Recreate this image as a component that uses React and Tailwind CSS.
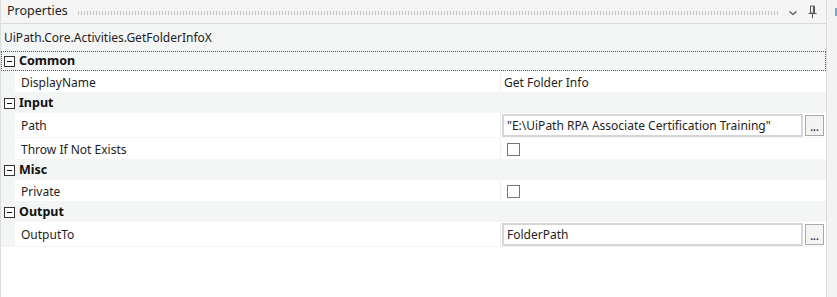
import React from 'react';

const font = { fontFamily: '"Noto Sans", "Open Sans", sans-serif' };

function Minus() {
  return (
    <svg width="11" height="11" viewBox="0 0 11 11" className="shrink-0">
      <rect x="0.5" y="0.5" width="10" height="10" fill="#fff" stroke="#333" />
      <line x1="3" y1="5.5" x2="8" y2="5.5" stroke="#111" />
    </svg>
  );
}

function Category({ name, focused }) {
  return (
    <div
      className={`flex h-[20px] items-center gap-[4px] pl-[2px] ${
        focused ? 'border border-dotted border-[#555]' : 'border border-transparent'
      }`}
    >
      <Minus />
      <span className="pt-[1px] text-[12.5px] font-bold text-[#111]">{name}</span>
    </div>
  );
}

function Row({ label, tall, children }) {
  return (
    <div className="flex pl-[14px]">
      <div className={`flex w-full bg-white ${tall ? 'h-[24px]' : 'h-[21px]'} mb-px`}>
        <div className="flex w-[486px] items-center border-r border-[#eef0f0] pl-[6px] pt-[2px] text-[12px] text-[#1e1e1e]">
          {label}
        </div>
        <div className="flex flex-1 items-center">{children}</div>
      </div>
    </div>
  );
}

function TextValue({ value }) {
  return (
    <div className="flex h-full flex-1 items-center gap-[2px] pl-[1px] pr-[2px]">
      <div className="flex h-[23px] flex-1 items-center border-2 border-[#d6d6d6] bg-white pl-[3px] pt-[1px] text-[12px] text-[#1e1e1e]">
        {value}
      </div>
      <div className="flex h-[21px] w-[19px] items-end justify-center border border-[#a9a9a9] bg-[#f4f4f4] pb-[3px] text-[10px] leading-none font-bold text-[#333]">
        ...
      </div>
    </div>
  );
}

function Check() {
  return <div className="ml-[6px] mt-[1px] h-[13px] w-[13px] border border-[#777] bg-white" />;
}

export default function App() {
  return (
    <div className="flex h-[297px] w-[837px] bg-[#f3f3f3]" style={font}>
      <div className="flex w-[827px] flex-col border-l border-r border-[#dcdcdc] bg-[#f4f5f5]">
        <div className="flex h-[24px] items-center border-b border-[#d9d9d9] bg-[#f5f5f5]">
          <span className="pl-[6px] text-[12.5px] text-[#1e1e1e]">Properties</span>
          <div className="ml-[9px] mr-[9px] mt-[2px] h-[4px] flex-1 bg-[radial-gradient(circle,#c4c4c4_0.7px,transparent_0.9px)] bg-[length:3px_2px]" />
          <svg width="10" height="8" viewBox="0 0 10 8" className="mt-[2px]">
            <path d="M1.5 2.5 L5 5.5 L8.5 2.5" fill="none" stroke="#555" strokeWidth="1.3" />
          </svg>
          <svg width="9" height="14" viewBox="0 0 9 14" className="ml-[10px] mr-[9px]">
            <path d="M2.5 1 H6.5 V8 H2.5 Z" fill="none" stroke="#555" />
            <path d="M0.5 8.5 H8.5" stroke="#555" />
            <path d="M4.5 9 V13" stroke="#555" />
            <path d="M5.5 1.5 V7.5" stroke="#555" />
          </svg>
        </div>
        <div className="flex h-[27px] items-center pl-[3px] text-[12px] text-[#1e1e1e]">
          UiPath.Core.Activities.GetFolderInfoX
        </div>
        <Category name="Common" focused />
        <Row label="DisplayName">
          <span className="pl-[3px] pt-[2px] text-[12px] text-[#1e1e1e]">Get Folder Info</span>
        </Row>
        <Category name="Input" />
        <Row label="Path" tall>
          <TextValue value={'"E:\\UiPath RPA Associate Certification Training"'} />
        </Row>
        <Row label="Throw If Not Exists">
          <Check />
        </Row>
        <Category name="Misc" />
        <Row label="Private">
          <Check />
        </Row>
        <Category name="Output" />
        <Row label="OutputTo" tall>
          <TextValue value="FolderPath" />
        </Row>
        <div className="flex-1 bg-white" />
      </div>
      <div className="relative flex-1">
        <div className="absolute right-0 top-[8px] h-[8px] w-[2px] bg-[#6aa8e0]" />
      </div>
    </div>
  );
}
